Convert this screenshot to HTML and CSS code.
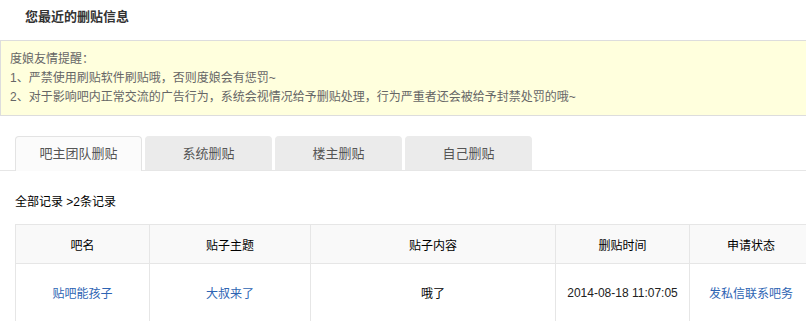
FILE: index.html
```html
<!DOCTYPE html>
<html lang="zh-CN">
<head>
  <meta charset="UTF-8">
  <title>您最近的删贴信息</title>
  <link rel="stylesheet" href="styles.css">
</head>
<body>
  <h2 class="page-title">您最近的删贴信息</h2>

  <div class="notice">
    <p>度娘友情提醒：</p>
    <p>1、严禁使用刷贴软件刷贴哦，否则度娘会有惩罚~</p>
    <p>2、对于影响吧内正常交流的广告行为，系统会视情况给予删贴处理，行为严重者还会被给予封禁处罚的哦~</p>
  </div>

  <ul class="tabs">
    <li class="tab active">吧主团队删贴</li>
    <li class="tab">系统删贴</li>
    <li class="tab">楼主删贴</li>
    <li class="tab">自己删贴</li>
  </ul>

  <div class="records">全部记录 &gt;2条记录</div>

  <table class="list">
    <thead>
      <tr>
        <th class="c-bar">吧名</th>
        <th class="c-title">贴子主题</th>
        <th class="c-content">贴子内容</th>
        <th class="c-time">删贴时间</th>
        <th class="c-state">申请状态</th>
      </tr>
    </thead>
    <tbody>
      <tr>
        <td><a href="#">贴吧能孩子</a></td>
        <td><a href="#">大叔来了</a></td>
        <td>哦了</td>
        <td class="time">2014-08-18 11:07:05</td>
        <td><a href="#">发私信联系吧务</a></td>
      </tr>
    </tbody>
  </table>
</body>
</html>
```

FILE: styles.css
```css
html {
  overflow: hidden;
}
body {
  margin: 0;
  width: 830px;
  font-family: "Liberation Sans", "Noto Sans CJK SC", sans-serif;
  font-size: 12px;
  color: #333;
}
.page-title {
  margin: 0;
  height: 40px;
  line-height: 33px;
  padding-left: 25px;
  font-size: 13px;
  font-weight: bold;
  color: #333;
}
.notice {
  background: #ffffdd;
  border: 1px solid #dddddd;
  padding: 9px 9px 8px;
  color: #666;
  line-height: 19px;
}
.notice p {
  margin: 0;
}
.tabs {
  list-style: none;
  margin: 20px 0 0;
  padding: 0 0 0 15px;
  display: flex;
  border-bottom: 1px solid #e6e6e6;
  height: 34px;
}
.tab {
  width: 125px;
  height: 33px;
  margin-right: 3px;
  background: #ebebeb;
  border: 1px solid #ebebeb;
  border-bottom: none;
  border-radius: 4px 4px 0 0;
  text-align: center;
  line-height: 33px;
  font-size: 13px;
  color: #555;
}
.tab.active {
  background: #fbfbfb;
  border-color: #e3e3e3;
  height: 34px;
}
.records {
  padding: 21px 0 0 15px;
  height: 32px;
  color: #000;
}
.list {
  margin-left: 15px;
  border-collapse: collapse;
  table-layout: fixed;
  width: 798px;
}
.list th,
.list td {
  padding: 0;
  border: 1px solid #e6e6e6;
  text-align: center;
  font-weight: normal;
  color: #000;
}
.list th {
  background: #f9f9f9;
  height: 38px;
}
.list td {
  height: 57px;
}
.list a {
  color: #2d64b3;
  text-decoration: none;
}
.list .time {
  color: #222;
}
.c-bar { width: 133px; }
.c-title { width: 160px; }
.c-content { width: 244px; }
.c-time { width: 133px; }
.c-state { width: auto; }
```
